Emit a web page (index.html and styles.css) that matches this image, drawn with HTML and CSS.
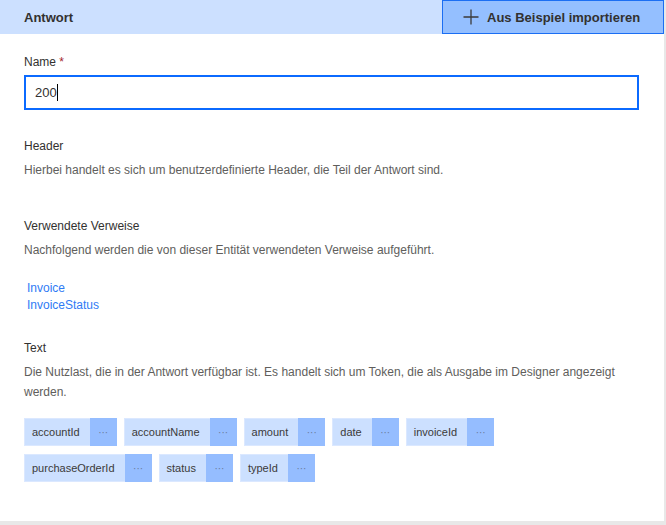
FILE: index.html
```html
<!DOCTYPE html>
<html lang="de">
<head>
  <meta charset="UTF-8">
  <meta name="viewport" content="width=device-width, initial-scale=1.0">
  <title>Antwort</title>
  <link rel="stylesheet" href="styles.css">
</head>
<body>
  <div class="panel">
    <div class="panel-header">
      <span class="panel-title">Antwort</span>
      <button class="btn-import">
        <svg class="plus" width="16" height="16" viewBox="0 0 16 16">
          <path d="M8 0.5v15M0.5 8h15" stroke="#3b3a39" stroke-width="1.3" fill="none"/>
        </svg>
        Aus Beispiel importieren
      </button>
    </div>

    <div class="panel-body">
      <div class="field">
        <label class="label">Name <span class="required">*</span></label>
        <div class="input"><span>200</span><span class="caret"></span></div>
      </div>

      <div class="section section-header">
        <div class="label">Header</div>
        <p class="desc">Hierbei handelt es sich um benutzerdefinierte Header, die Teil der Antwort sind.</p>
      </div>

      <div class="section section-refs">
        <div class="label">Verwendete Verweise</div>
        <p class="desc">Nachfolgend werden die von dieser Entität verwendeten Verweise aufgeführt.</p>
        <ul class="refs">
          <li><a href="#">Invoice</a></li>
          <li><a href="#">InvoiceStatus</a></li>
        </ul>
      </div>

      <div class="section section-text">
        <div class="label">Text</div>
        <p class="desc">Die Nutzlast, die in der Antwort verfügbar ist. Es handelt sich um Token, die als Ausgabe im Designer angezeigt werden.</p>
        <div class="tokens">
          <div class="token"><span class="token-name">accountId</span><span class="token-more">···</span></div>
          <div class="token"><span class="token-name">accountName</span><span class="token-more">···</span></div>
          <div class="token"><span class="token-name">amount</span><span class="token-more">···</span></div>
          <div class="token"><span class="token-name">date</span><span class="token-more">···</span></div>
          <div class="token"><span class="token-name">invoiceId</span><span class="token-more">···</span></div>
          <div class="token"><span class="token-name">purchaseOrderId</span><span class="token-more">···</span></div>
          <div class="token"><span class="token-name">status</span><span class="token-more">···</span></div>
          <div class="token"><span class="token-name">typeId</span><span class="token-more">···</span></div>
        </div>
      </div>
    </div>
  </div>
</body>
</html>
```

FILE: styles.css
```css
* {
  margin: 0;
  padding: 0;
  box-sizing: border-box;
}

body {
  font-family: 'Segoe UI', 'Liberation Sans', Arial, sans-serif;
  background: #e8e8e8;
  color: #323130;
  height: 525px;
  overflow: hidden;
}

.panel {
  width: 664px;
  height: 521px;
  background: white;
}

.panel-header {
  height: 34px;
  background: #cce0ff;
  display: flex;
  align-items: stretch;
  justify-content: space-between;
}

.panel-title {
  font-size: 13px;
  font-weight: bold;
  color: #323130;
  padding-left: 24px;
  display: flex;
  align-items: center;
}

.btn-import {
  width: 222px;
  background: #94bfff;
  border: 1px solid #1b6ef3;
  font-family: inherit;
  font-size: 13px;
  font-weight: bold;
  color: #323130;
  display: flex;
  align-items: center;
  gap: 8px;
  padding-left: 20px;
  cursor: pointer;
}

.panel-body {
  padding: 18px 25px 0 24px;
}

.label {
  display: block;
  font-size: 12px;
  line-height: 20px;
  color: #323130;
}

.required {
  color: #a4262c;
}

.input {
  margin-top: 3px;
  height: 35px;
  border: 2px solid #0b6aff;
  padding-left: 9px;
  display: flex;
  align-items: center;
  font-size: 13px;
  color: #323130;
}

.caret {
  display: inline-block;
  width: 1px;
  height: 17px;
  background: #000;
}

.desc {
  font-size: 12px;
  line-height: 20px;
  color: #605e5c;
  margin-top: 4px;
}

.section-header {
  margin-top: 26px;
}

.section-refs {
  margin-top: 36px;
}

.refs {
  list-style: none;
  margin-top: 20px;
  padding-left: 3px;
}

.refs li {
  font-size: 12px;
  line-height: 17px;
}

.refs a {
  color: #2f7bf5;
  text-decoration: none;
}

.section-text {
  margin-top: 24px;
}

.tokens {
  display: flex;
  flex-wrap: wrap;
  gap: 8px 7px;
  width: 500px;
  margin-top: 16px;
}

.token {
  display: flex;
  height: 28px;
  background: #cce0ff;
  border: 1px solid #dbe8ff;
  font-size: 11px;
}

.token-name {
  padding: 0 10px 0 7px;
  display: flex;
  align-items: center;
  color: #3b3a39;
}

.token-more {
  width: 27px;
  background: #95bdff;
  display: flex;
  align-items: center;
  justify-content: center;
  color: #6b7a99;
  font-size: 10px;
  margin: -1px -1px -1px 0;
}
```
